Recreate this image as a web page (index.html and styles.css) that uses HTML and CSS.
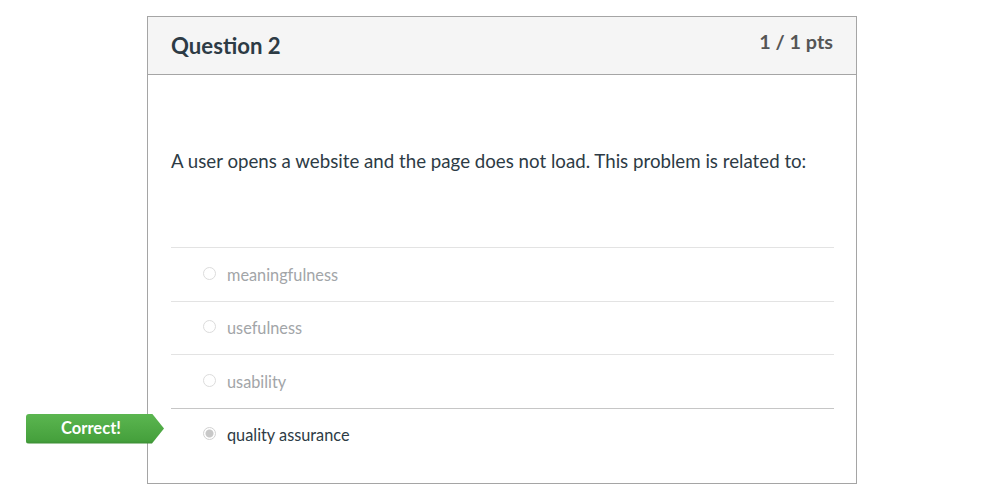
FILE: index.html
```html
<!DOCTYPE html>
<html>
<head>
<meta charset="utf-8">
<link rel="stylesheet" href="styles.css">
</head>
<body>
<div class="card">
  <div class="card-header">
    <h2 class="title">Question 2</h2>
    <div class="pts">1 / 1 pts</div>
  </div>
  <div class="card-body">
    <p class="question">A user opens a website and the page does not load. This problem is related to:</p>
    <div class="answers">
      <div class="answer"><span class="radio"></span><span class="label">meaningfulness</span></div>
      <div class="answer"><span class="radio"></span><span class="label">usefulness</span></div>
      <div class="answer"><span class="radio"></span><span class="label">usability</span></div>
      <div class="answer selected">
        <span class="badge">Correct!</span>
        <span class="radio checked"></span><span class="label">quality assurance</span>
      </div>
    </div>
  </div>
</div>
</body>
</html>
```
FILE: styles.css
```css
* { box-sizing: border-box; }
body {
  margin: 0;
  background: #fff;
  font-family: Lato, "Open Sans", sans-serif;
  color: #2d3b45;
}
.card {
  margin: 16px 0 0 147px;
  width: 710px;
  height: 468px;
  border: 1px solid #a5a5a5;
}
.card-header {
  height: 58px;
  background: #f5f5f5;
  border-bottom: 1px solid #a5a5a5;
  display: flex;
  justify-content: space-between;
  padding: 0 23px;
}
.title {
  margin: 0;
  padding-top: 15px;
  font-size: 22.2px;
  font-weight: 700;
  line-height: 28px;
  color: #2d3b45;
}
.pts {
  padding-top: 11px;
  font-size: 19.8px;
  font-weight: 700;
  line-height: 26px;
  color: #555;
}
.card-body {
  padding: 0 22px 0 23px;
}
.question {
  margin: 0;
  padding-top: 73px;
  height: 172px;
  font-size: 18.7px;
  line-height: 27px;
  color: #2d3b45;
}
.answers {
  display: flex;
  flex-direction: column;
}
.answer {
  position: relative;
  height: 53.5px;
  border-top: 1px solid #e3e3e3;
  display: flex;
  align-items: center;
  padding-left: 32px;
  color: #a2a5a8;
  font-size: 16.3px;
}
.answer:last-child { border-top-color: #c6c6c6; }
.answer.selected { color: #2d3b45; }
.radio {
  width: 13px;
  height: 13px;
  border-radius: 50%;
  border: 1px solid #dcdcdc;
  background: #fff;
  margin-right: 11px;
  margin-top: -2px;
}
.radio.checked {
  border-color: #d2d2d2;
  background: radial-gradient(circle, #c8c8c8 0 3.5px, #fff 4.5px);
}
.label { line-height: 20px; margin-top: 1px; }
.badge {
  position: absolute;
  left: -145px;
  top: 5px;
  width: 138px;
  height: 30px;
  padding-right: 8px;
  padding-bottom: 2px;
  background: linear-gradient(#5bb650, #45a03c 90%, #3a8a33);
  clip-path: polygon(0 0, 126px 0, 138px 50%, 126px 100%, 0 100%);
  border-radius: 3px;
  color: #fff;
  font-weight: 700;
  font-size: 16.5px;
  display: flex;
  align-items: center;
  justify-content: center;
}
```
